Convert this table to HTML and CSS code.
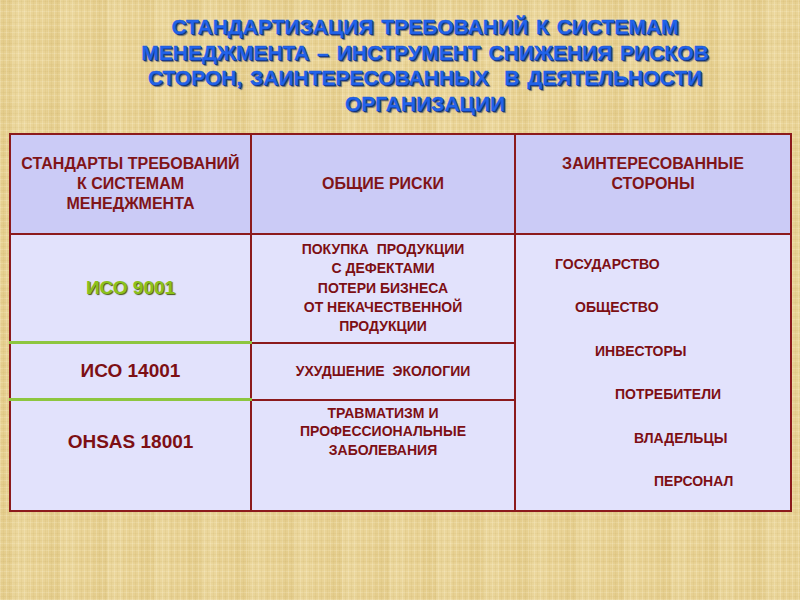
FILE: index.html
```html
<!DOCTYPE html>
<html lang="ru">
<head>
<meta charset="utf-8">
<link rel="stylesheet" href="styles.css">
</head>
<body>
<div class="page">
  <h1 class="title">СТАНДАРТИЗАЦИЯ ТРЕБОВАНИЙ К СИСТЕМАМ<br>МЕНЕДЖМЕНТА – ИНСТРУМЕНТ СНИЖЕНИЯ РИСКОВ<br>СТОРОН, ЗАИНТЕРЕСОВАННЫХ&nbsp; В ДЕЯТЕЛЬНОСТИ<br>ОРГАНИЗАЦИИ</h1>
  <table class="grid">
    <colgroup>
      <col class="c1"><col class="c2"><col class="c3">
    </colgroup>
    <tr class="head">
      <th class="h1c">СТАНДАРТЫ ТРЕБОВАНИЙ<br>К СИСТЕМАМ<br>МЕНЕДЖМЕНТА</th>
      <th class="h2c">ОБЩИЕ РИСКИ</th>
      <th class="h3c">ЗАИНТЕРЕСОВАННЫЕ<br>СТОРОНЫ</th>
    </tr>
    <tr class="r1">
      <td class="std green-b"><span class="iso9001">ИСО 9001</span></td>
      <td class="risk">
        <p>ПОКУПКА&nbsp; ПРОДУКЦИИ<br>С ДЕФЕКТАМИ</p>
        <p>ПОТЕРИ БИЗНЕСА<br>ОТ НЕКАЧЕСТВЕННОЙ<br>ПРОДУКЦИИ</p>
      </td>
      <td class="parties" rowspan="3">
        <ul class="stairs">
          <li class="s0">ГОСУДАРСТВО</li>
          <li class="s1">ОБЩЕСТВО</li>
          <li class="s2">ИНВЕСТОРЫ</li>
          <li class="s3">ПОТРЕБИТЕЛИ</li>
          <li class="s4">ВЛАДЕЛЬЦЫ</li>
          <li class="s5">ПЕРСОНАЛ</li>
        </ul>
      </td>
    </tr>
    <tr class="r2">
      <td class="std green-b">ИСО 14001</td>
      <td class="risk">УХУДШЕНИЕ&nbsp; ЭКОЛОГИИ</td>
    </tr>
    <tr class="r3">
      <td class="std top">OHSAS 18001</td>
      <td class="risk top">ТРАВМАТИЗМ И<br>ПРОФЕССИОНАЛЬНЫЕ<br>ЗАБОЛЕВАНИЯ</td>
    </tr>
  </table>
</div>
</body>
</html>
```

FILE: styles.css
```css
html, body {
  margin: 0;
  padding: 0;
}
body {
  width: 800px;
  height: 600px;
  overflow: hidden;
  font-family: "Liberation Sans", Arial, sans-serif;
  background-color: #e9d396;
  background-image:
    repeating-linear-gradient(90deg, rgba(255,248,220,0.22) 0 1px, rgba(0,0,0,0) 1px 3px, rgba(185,155,75,0.10) 3px 4px, rgba(0,0,0,0) 4px 6px),
    repeating-linear-gradient(0deg, rgba(255,248,220,0.18) 0 1px, rgba(0,0,0,0) 1px 3px, rgba(185,155,75,0.09) 3px 4px, rgba(0,0,0,0) 4px 7px),
    repeating-linear-gradient(90deg, rgba(205,175,95,0.10) 0 13px, rgba(255,245,210,0.10) 13px 29px, rgba(0,0,0,0) 29px 47px),
    repeating-linear-gradient(0deg, rgba(205,175,95,0.07) 0 17px, rgba(0,0,0,0) 17px 37px);
}
.page {
  padding: 14px 0 0 9px;
}
.title {
  margin: 0 0 17px -9px;
  padding-left: 50px;
  width: 750px;
  text-align: center;
  font-family: "Liberation Sans", Arial, sans-serif;
  font-weight: bold;
  font-size: 21px;
  line-height: 25.5px;
  word-spacing: 2px;
  letter-spacing: 0;
  color: #2163ea;
  -webkit-text-stroke: 0.4px #1d58d8;
  text-shadow: 1px 1px 0 #102f78, 2px 2px 1px rgba(10,30,80,0.55);
  white-space: nowrap;
}
.grid {
  border-collapse: collapse;
  table-layout: fixed;
  width: 781px;
  color: #7d0f14;
  text-align: center;
}
.c1 { width: 241px; }
.c2 { width: 264px; }
.c3 { width: 276px; }
.grid th, .grid td {
  border: 2px solid #8c1a1c;
  padding: 0;
}
.head th {
  height: 98px;
  background: #cbcbf6;
  font-weight: bold;
  font-size: 16px;
  line-height: 20px;
  vertical-align: middle;
  color: #801418;
}
.head .h3c { height: 78px; padding-bottom: 20px; }
.grid td {
  background: #e2e2fc;
  vertical-align: middle;
}
.r1 td { height: 106px; }
.r2 td { height: 54px; }
.green-b {
  border-bottom: 3px solid #8dc63f !important;
}
.std {
  font-weight: bold;
  font-size: 19px;
}
.iso9001 {
  color: #8cc21a;
  text-shadow: 1px 1px 1px #4a5a10;
}
.risk {
  font-weight: bold;
  font-size: 14px;
  line-height: 19px;
}
.risk p { margin: 0; }
.risk p + p { margin-top: 1px; }
.top { vertical-align: top !important; }
.r3 .std { height: 79px; padding-top: 30px; }
.r3 .risk { height: 106px; padding-top: 3px; line-height: 18.5px; }
.parties { vertical-align: top !important; text-align: left; }
.stairs {
  list-style: none;
  margin: 0;
  padding: 21px 0 0 39px;
  font-weight: bold;
  font-size: 14px;
  line-height: 17px;
}
.stairs li + li { margin-top: 26.4px; }
.s1 { padding-left: 20px; }
.s2 { padding-left: 40px; }
.s3 { padding-left: 60px; }
.s4 { padding-left: 79px; }
.s5 { padding-left: 99px; }
```
